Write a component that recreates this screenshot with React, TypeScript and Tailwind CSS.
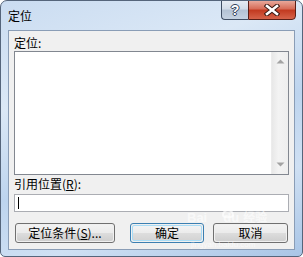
const cjk = "font-['SimSun','Noto_Sans_CJK_SC',sans-serif]";

function CaptionButtons() {
  return (
    <div className="flex h-[20px] -mt-px mr-[6px] ml-auto">
      <div className="w-[27px] h-full rounded-bl-[4px] border border-[#3f4e63] border-r-0 bg-[linear-gradient(to_bottom,#e6ecf3_0%,#d2dce8_45%,#b3c2d4_50%,#c5d2e1_100%)] flex items-center justify-center">
        <span className="text-[14px] font-bold leading-none text-white font-['Liberation_Sans',sans-serif] [text-shadow:1px_0_0_#33425a,-1px_0_0_#33425a,0_1px_0_#33425a,0_-1px_0_#33425a]">
          ?
        </span>
      </div>
      <div className="w-[48px] h-full rounded-br-[4px] border border-[#5a1f17] bg-[linear-gradient(to_bottom,#e8a89a_0%,#d66a55_45%,#c2391f_50%,#d6634a_100%)] flex items-center justify-center">
        <svg width="16" height="12" viewBox="0 0 16 12">
          <path d="M3 2 L13 10 M13 2 L3 10" stroke="#3a1a14" strokeWidth="4.6" strokeLinecap="square" />
          <path d="M3 2 L13 10 M13 2 L3 10" stroke="#ffffff" strokeWidth="2.6" strokeLinecap="square" />
        </svg>
      </div>
    </div>
  );
}

function ScrollArrow({ up }: { up: boolean }) {
  return (
    <svg width="9" height="5" viewBox="0 0 9 5">
      <path d={up ? 'M0.5 4.5 L4.5 0.5 L8.5 4.5 Z' : 'M0.5 0.5 L4.5 4.5 L8.5 0.5 Z'} fill="#a3a3a3" />
    </svg>
  );
}

function Button({ label, width, focused }: { label: React.ReactNode; width: string; focused?: boolean }) {
  return (
    <div
      className={`${width} h-[20px] rounded-[3px] border ${
        focused ? 'border-[#3c7fb1]' : 'border-[#707070]'
      } p-px`}
    >
      <div
        className={`h-full rounded-[2px] flex items-center justify-center text-[12px] text-black ${
          focused
            ? 'border border-[#a9dcf6] bg-[linear-gradient(to_bottom,#f3f3f3_0%,#ececec_48%,#dedede_50%,#d4d4d4_100%)]'
            : 'bg-[linear-gradient(to_bottom,#f2f2f2_0%,#ebebeb_48%,#dddddd_50%,#cfcfcf_100%)]'
        }`}
      >
        {label}
      </div>
    </div>
  );
}

// faint baidu paw for the watermark
function Paw() {
  return (
    <svg width="22" height="22" viewBox="0 0 22 22" className="opacity-70">
      <g fill="none" stroke="#ffffff" strokeWidth="2">
        <ellipse cx="5" cy="8" rx="2.5" ry="3" />
        <ellipse cx="9.5" cy="4" rx="2.5" ry="3" />
        <ellipse cx="14.5" cy="4" rx="2.5" ry="3" />
        <ellipse cx="18" cy="9" rx="2.5" ry="3" />
        <path d="M6 18 C6 12 16 12 16 18 C16 21 6 21 6 18 Z" />
      </g>
    </svg>
  );
}

export default function App() {
  return (
    <div
      className={`relative w-[303px] h-[257px] rounded-t-[7px] rounded-b-[5px] border border-[#55657b] bg-[linear-gradient(160deg,#cadcf1_0%,#dbe8f6_30%,#bdd4ee_55%,#cfe0f3_75%,#a9c5e6_100%)] ${cjk} select-none overflow-hidden`}
    >
      <div className="flex items-start h-[29px]">
        <div className="pl-[7px] pt-[8px] text-[12px] leading-[14px] text-black">定位</div>
        <CaptionButtons />
      </div>

      <div className="mx-[7px] h-[220px] border border-[#8a9db6] bg-[#f0f0f0] px-[5px] pt-[5px] flex flex-col">
        <div className="h-[14px] text-[12px] leading-[14px] text-black">定位:</div>
        <div className="mt-px h-[124px] border border-[#828790] bg-white flex justify-end">
          <div className="w-[17px] h-full bg-[linear-gradient(to_right,#e8e8e8,#f3f3f3_40%,#eeeeee)] border-l border-[#ececec] flex flex-col items-center justify-between py-[7px]">
            <ScrollArrow up />
            <ScrollArrow up={false} />
          </div>
        </div>
        <div className="mt-[2px] h-[14px] text-[12px] leading-[14px] text-black">
          引用位置(<span className="underline">R</span>):
        </div>
        <div className="mt-[3px] h-[18px] border border-[#abadb3] bg-white flex items-center pl-[3px]">
          <div className="w-px h-[12px] bg-black" />
        </div>
        <div className="mt-[11px] flex">
          <div className="ml-px">
            <Button
              width="w-[100px]"
              label={
                <span>
                  定位条件(<span className="underline">S</span>)...
                </span>
              }
            />
          </div>
          <div className="ml-[15px]">
            <Button width="w-[74px]" label="确定" focused />
          </div>
          <div className="ml-[9px]">
            <Button width="w-[75px]" label="取消" />
          </div>
        </div>
      </div>

      {/* watermark */}
      <div className="absolute left-[216px] top-[196px] pointer-events-none">
        <Paw />
      </div>
      <div className="absolute left-[186px] top-[210px] pointer-events-none text-white/60 font-['Liberation_Sans',sans-serif] text-[13px] font-bold leading-none">
        Bai<span className="ml-[16px]">du</span>
        <span className={`${cjk} ml-[4px] text-[12px]`}>经验</span>
      </div>
      <div className="absolute left-[190px] top-[240px] pointer-events-none text-white/60 font-['Liberation_Sans',sans-serif] text-[8px] leading-none">
        jingyan.baidu.com
      </div>
    </div>
  );
}
